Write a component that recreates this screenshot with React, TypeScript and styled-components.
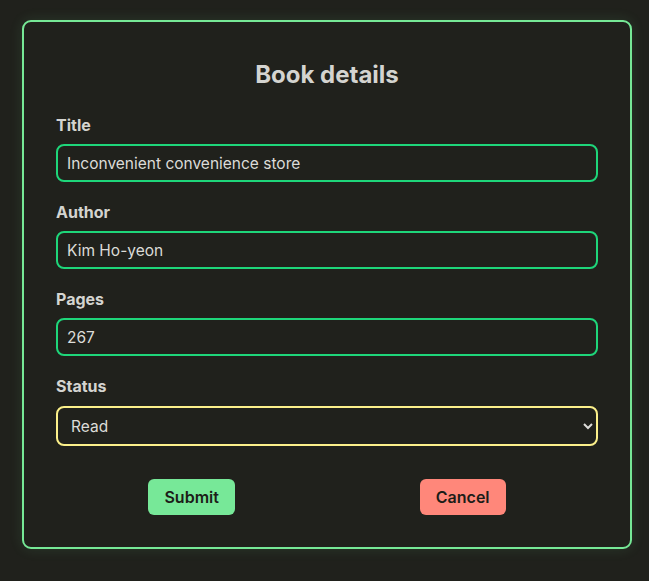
import React from "react";
import styled, { createGlobalStyle } from "styled-components";

const Global = createGlobalStyle`
  html, body { margin: 0; padding: 0; background: #20211c; }
  body { font-family: Inter, "Noto Sans", sans-serif; color: #d8d8d4; }
  * { box-sizing: border-box; }
`;

const Page = styled.div`
  padding: 20px 18px 33px 22px;
  min-height: 581px;
`;

const Card = styled.form`
  width: 610px;
  height: 529px;
  border: 2px solid #76e896;
  border-radius: 9px;
  background: #20211c;
  box-shadow: 0 0 14px rgba(118, 232, 150, 0.12);
  padding: 34px 32px 32px;
  display: flex;
  flex-direction: column;
`;

const Heading = styled.h2`
  margin: 0 0 22px;
  text-align: center;
  font-size: 24px;
  font-weight: 700;
  line-height: 38px;
  color: #d4d4d0;
`;

const Field = styled.div`
  display: flex;
  flex-direction: column;
  gap: 10px;
  margin-bottom: 21px;
`;

const Label = styled.label`
  font-size: 16px;
  font-weight: 700;
  line-height: 18px;
  color: #d4d4d0;
`;

const Input = styled.input`
  height: 38px;
  border: 2px solid #1ed67a;
  border-radius: 8px;
  background: #20211c;
  color: #dcdcd8;
  font-family: inherit;
  font-size: 15.5px;
  padding: 0 9px;
  outline: none;
`;

const Select = styled.select`
  height: 40px;
  margin-top: 1px;
  border: 2px solid #fbf08a;
  border-radius: 8px;
  background: #20211c;
  color: #dcdcd8;
  font-family: inherit;
  font-size: 15.5px;
  padding: 0 9px;
  outline: none;
  color-scheme: dark;
`;

const Actions = styled.div`
  display: flex;
  justify-content: space-around;
  margin-top: 12px;
`;

const Button = styled.button<{ $bg: string }>`
  height: 36px;
  padding: 0 16px;
  border: none;
  border-radius: 6px;
  background: ${(p) => p.$bg};
  color: #1c1d18;
  font-family: inherit;
  font-size: 16px;
  font-weight: 600;
  cursor: pointer;
`;

export default function App() {
  return (
    <Page>
      <Global />
      <Card onSubmit={(e) => e.preventDefault()}>
        <Heading>Book details</Heading>
        <Field>
          <Label>Title</Label>
          <Input defaultValue="Inconvenient convenience store" />
        </Field>
        <Field>
          <Label>Author</Label>
          <Input defaultValue="Kim Ho-yeon" />
        </Field>
        <Field>
          <Label>Pages</Label>
          <Input defaultValue="267" />
        </Field>
        <Field>
          <Label>Status</Label>
          <Select defaultValue="Read">
            <option>Read</option>
            <option>Reading</option>
            <option>To read</option>
          </Select>
        </Field>
        <Actions>
          <Button $bg="#77e898" type="submit">Submit</Button>
          <Button $bg="#ff877a" type="button">Cancel</Button>
        </Actions>
      </Card>
    </Page>
  );
}
